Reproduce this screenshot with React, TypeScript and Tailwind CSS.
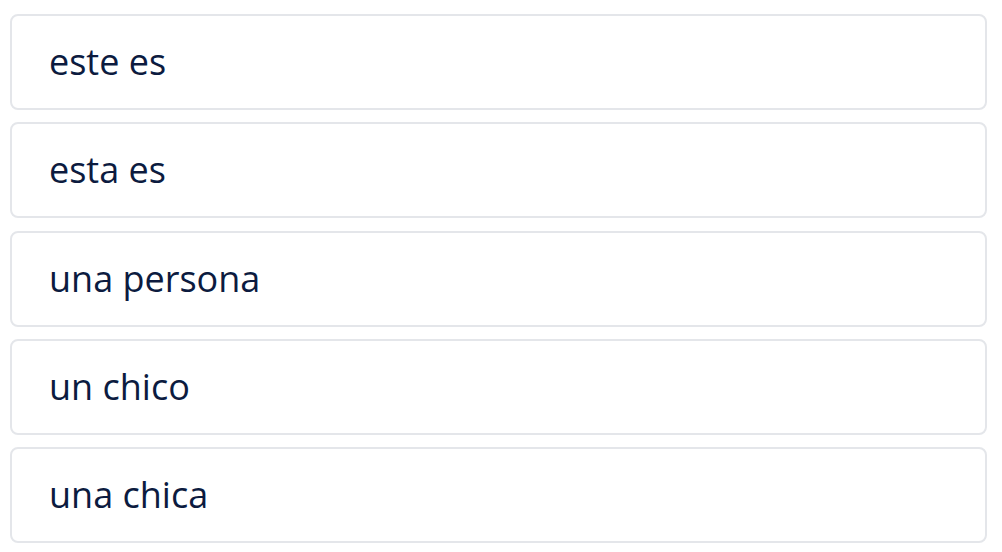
const items = ["este es", "esta es", "una persona", "un chico", "una chica"];

export default function App() {
  return (
    <div className="min-h-[552px] w-[1002px] bg-white pt-[14px]" style={{ fontFamily: "'Open Sans', 'Noto Sans', sans-serif" }}>
      <div className="ml-[10px] flex w-[977px] flex-col gap-[12.25px]">
        {items.map((t) => (
          <div
            key={t}
            className="flex h-[96px] items-center rounded-[8px] border-2 border-[#e4e6ea] bg-white pl-[37px] text-[36px] font-medium text-[#0c1b3f]"
          >
            {t}
          </div>
        ))}
      </div>
    </div>
  );
}
